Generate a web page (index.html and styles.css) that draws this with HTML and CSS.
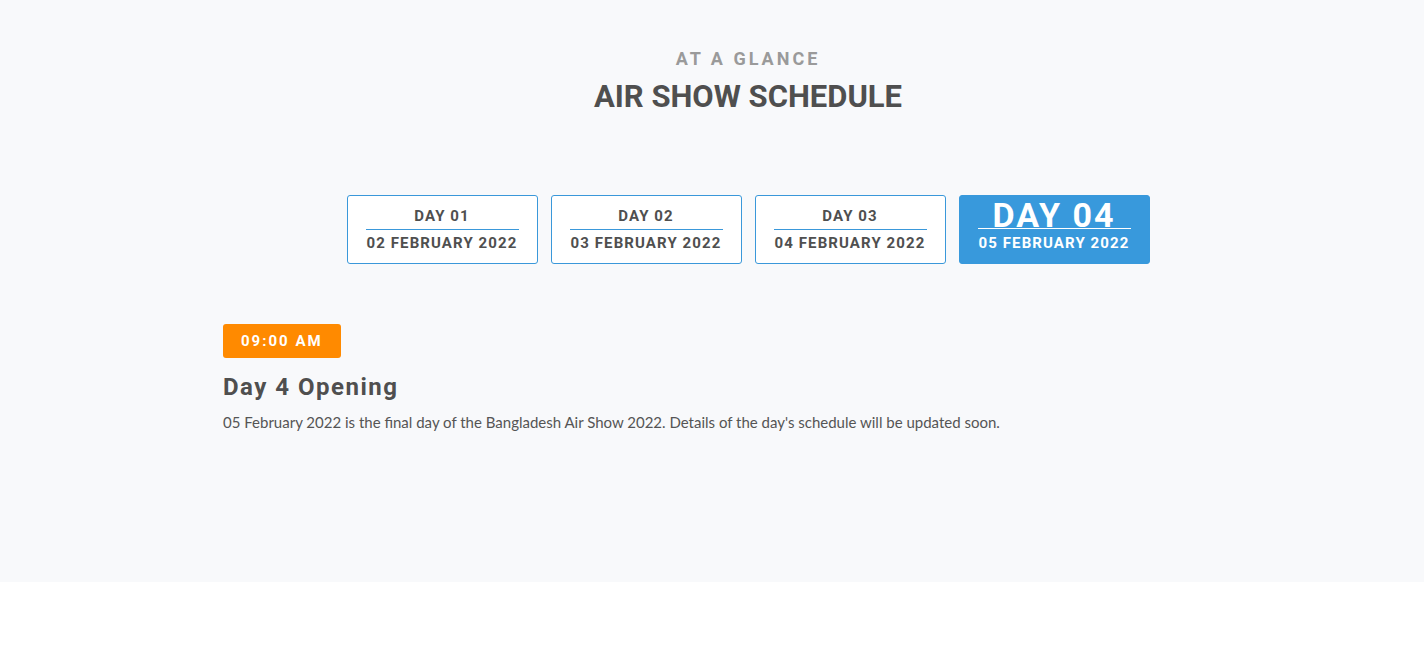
FILE: index.html
```html
<!DOCTYPE html>
<html lang="en">
<head>
<meta charset="utf-8">
<title>Air Show Schedule</title>
<link rel="stylesheet" href="styles.css">
</head>
<body>
<section class="schedule">
  <div class="container">
    <header class="heading">
      <p class="eyebrow">AT A GLANCE</p>
      <h2 class="title">AIR SHOW SCHEDULE</h2>
    </header>
    <nav class="tabs">
      <a class="tab"><span class="tab-day">DAY 01</span><span class="tab-date">02 FEBRUARY 2022</span></a>
      <a class="tab"><span class="tab-day">DAY 02</span><span class="tab-date">03 FEBRUARY 2022</span></a>
      <a class="tab"><span class="tab-day">DAY 03</span><span class="tab-date">04 FEBRUARY 2022</span></a>
      <a class="tab active"><span class="tab-day">DAY 04</span><span class="tab-date">05 FEBRUARY 2022</span></a>
    </nav>
    <article class="event">
      <span class="time">09:00 AM</span>
      <h3 class="event-title">Day 4 Opening</h3>
      <p class="event-text">05 February 2022 is the final day of the Bangladesh Air Show 2022. Details of the day's schedule will be updated soon.</p>
    </article>
  </div>
</section>
</body>
</html>
```
FILE: styles.css
```css
* { box-sizing: border-box; }
html, body { margin: 0; padding: 0; background: #ffffff; }
body { font-family: "Lato", "Liberation Sans", sans-serif; color: #555555; }

.schedule {
  background: #f8f9fb;
  height: 582px;
  padding-top: 48px;
}
.container {
  width: 1050px;
  margin-left: 223px;
}
.heading { text-align: center; }
.eyebrow {
  margin: 0;
  font-family: "Roboto", "Liberation Sans", sans-serif;
  font-weight: 700;
  font-size: 18px;
  line-height: 22px;
  letter-spacing: 3px;
  color: #9a9a9a;
}
.title {
  margin: 9px 0 0;
  font-family: "Roboto", "Liberation Sans", sans-serif;
  font-weight: 700;
  font-size: 31px;
  line-height: 36px;
  color: #4f4f4f;
}

.tabs {
  display: flex;
  justify-content: center;
  gap: 13px;
  margin-top: 80px;
}
.tab {
  width: 191px;
  height: 69px;
  background: #ffffff;
  border: 1px solid #3a98da;
  border-radius: 3px;
  display: flex;
  flex-direction: column;
  align-items: center;
  justify-content: center;
  padding: 0 18px;
  font-family: "Roboto", "Liberation Sans", sans-serif;
  font-weight: 700;
  color: #4f4f4f;
  letter-spacing: 1.1px;
}
.tab-day {
  display: block;
  width: 100%;
  text-align: center;
  font-size: 15px;
  line-height: 18px;
  padding-bottom: 4px;
  border-bottom: 1px solid #3a98da;
}
.tab-date {
  display: block;
  font-size: 15px;
  line-height: 18px;
  padding-top: 4px;
}
.tab.active {
  background: #3899dc;
  border-color: #3899dc;
  color: #ffffff;
  justify-content: flex-start;
  padding-top: 6px;
}
.tab.active .tab-day {
  font-size: 34px;
  line-height: 26px;
  padding-bottom: 0;
  border-bottom-color: #ffffff;
  letter-spacing: 2px;
}
.tab.active .tab-date { padding-top: 5px; }

.event { margin-top: 60px; }
.time {
  display: inline-block;
  background: #ff8a00;
  color: #ffffff;
  border-radius: 3px;
  padding: 0 18px;
  height: 34px;
  line-height: 34px;
  font-family: "Roboto", "Liberation Sans", sans-serif;
  font-weight: 700;
  font-size: 15px;
  letter-spacing: 2px;
}
.event-title {
  margin: 14px 0 0;
  font-family: "Roboto", "Liberation Sans", sans-serif;
  font-weight: 700;
  font-size: 24px;
  line-height: 30px;
  letter-spacing: 1.5px;
  color: #4f4f4f;
}
.event-text {
  margin: 8px 0 0;
  font-size: 15px;
  line-height: 24px;
  color: #555555;
}
```
